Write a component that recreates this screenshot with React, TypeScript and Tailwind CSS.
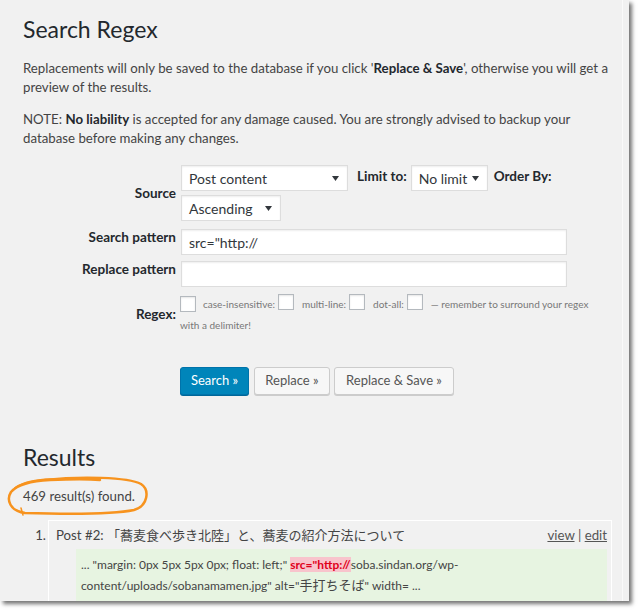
import React from 'react';

const FONT = { fontFamily: 'Lato, "Open Sans", "Noto Sans CJK JP", sans-serif' };
const JP = { fontFamily: 'Lato, "Noto Sans CJK JP", sans-serif' };

function Arrow() {
  return (
    <svg width="7" height="5" viewBox="0 0 7 5" className="shrink-0">
      <path d="M0 0h7L3.5 5z" fill="#32373c" />
    </svg>
  );
}

function Select({ value, width }: { value: string; width: string }) {
  return (
    <div className={`${width} h-[26px] bg-white border border-[#ddd] shadow-[inset_0_1px_2px_rgba(0,0,0,0.07)] flex items-center justify-between pl-[7px] pr-[8px] text-[14px] text-[#32373c]`}>
      <span>{value}</span>
      <Arrow />
    </div>
  );
}

function Checkbox() {
  return <span className="inline-block w-[16px] h-[16px] bg-white border border-[#b4b9be] shadow-[inset_0_1px_2px_rgba(0,0,0,0.1)] shrink-0" />;
}

export default function App() {
  return (
    <div className="w-[640px] h-[612px] bg-white" style={FONT}>
      <div className="relative w-[629px] h-[601px] bg-[#f1f1f1] overflow-hidden shadow-[3px_3px_4px_rgba(0,0,0,0.55)]">
        <div className="w-[623px] h-full border-r border-[#fafafa] pl-[23px] pt-[15px] text-[#444]">
          <h1 className="text-[23px] leading-[29px] text-[#23282d]">Search Regex</h1>

          <p className="mt-[15px] text-[13.25px] leading-[19px] whitespace-nowrap">
            Replacements will only be saved to the database if you click '<b className="text-[#23282d]">Replace &amp; Save</b>', otherwise you will get a
            <br />
            preview of the results.
          </p>
          <p className="mt-[13px] text-[13.25px] leading-[19px] whitespace-nowrap">
            NOTE: <b className="text-[#23282d]">No liability</b> is accepted for any damage caused. You are strongly advised to backup your
            <br />
            database before making any changes.
          </p>

          {/* form */}
          <div className="mt-[17px] text-[13.5px]">
            <div className="flex items-center">
              <div className="w-[153px] text-right font-bold text-[#23282d]">Source</div>
              <div className="ml-[5px] flex flex-col gap-[4px]">
                <div className="flex items-start">
                  <Select value="Post content" width="w-[167px]" />
                  <span className="ml-[9px] mt-[2px] leading-[19px] font-bold text-[#23282d]">Limit to:</span>
                  <div className="ml-[4px]">
                    <Select value="No limit" width="w-[77px]" />
                  </div>
                  <span className="ml-[6px] mt-[2px] leading-[19px] font-bold text-[#23282d]">Order By:</span>
                </div>
                <Select value="Ascending" width="w-[100px]" />
              </div>
            </div>

            <div className="flex items-start mt-[8px]">
              <div className="w-[153px] text-right font-bold leading-[17px] text-[#23282d]">Search pattern</div>
              <div className="ml-[5px] w-[386px] h-[26px] bg-white border border-[#ddd] shadow-[inset_0_1px_2px_rgba(0,0,0,0.07)] flex items-center pl-[7px] text-[14px] text-[#32373c]">
                src="http://
              </div>
            </div>

            <div className="flex items-start mt-[6px]">
              <div className="w-[153px] text-right font-bold leading-[17px] text-[#23282d]">Replace pattern</div>
              <div className="ml-[5px] w-[386px] h-[26px] bg-white border border-[#ddd] shadow-[inset_0_1px_2px_rgba(0,0,0,0.07)]" />
            </div>

            <div className="flex items-center mt-[9px]">
              <div className="w-[153px] text-right font-bold text-[#23282d]">Regex:</div>
              <div className="ml-[4px] flex flex-col text-[10px] text-[#777]">
                <div className="flex items-center h-[16px] whitespace-nowrap">
                  <Checkbox />
                  <span className="ml-[7px]">case-insensitive:</span>
                  <span className="ml-[3px]"><Checkbox /></span>
                  <span className="ml-[8px]">multi-line:</span>
                  <span className="ml-[3px]"><Checkbox /></span>
                  <span className="ml-[8px]">dot-all:</span>
                  <span className="ml-[3px]"><Checkbox /></span>
                  <span className="ml-[8px]">— remember to surround your regex</span>
                </div>
                <div className="mt-[6px] leading-[14px]">with a delimiter!</div>
              </div>
            </div>

            <div className="flex items-center gap-[4px] ml-[157px] mt-[35px] text-[13px]">
              <button className="w-[69px] h-[28px] rounded-[3px] bg-[#0085ba] border border-[#0073aa] text-white shadow-[0_1px_0_#006799]">
                Search »
              </button>
              <button className="ml-[1px] w-[76px] h-[28px] rounded-[3px] bg-[#f7f7f7] border border-[#ccc] text-[#555] shadow-[0_1px_0_#ccc]">
                Replace »
              </button>
              <button className="w-[120px] h-[28px] rounded-[3px] bg-[#f7f7f7] border border-[#ccc] text-[#555] shadow-[0_1px_0_#ccc]">
                Replace &amp; Save »
              </button>
            </div>
          </div>

          <h2 className="mt-[48px] text-[23px] leading-[29px] text-[#23282d]">Results</h2>
          <p className="mt-[15px] text-[13.25px] leading-[19px]">469 result(s) found.</p>

          <div className="flex mt-[14px] text-[13.25px]">
            <div className="w-[25px] pr-[2px] pt-[6px] text-right leading-[19px]">1.</div>
            <div className="w-[564px] border border-white pt-[5px] pb-[20px]">
              <div className="flex justify-between items-center pl-[7px] pr-[4px] leading-[19px]">
                <span style={JP}>
                  Post #2: <span className="text-[13px]">「蕎麦食べ歩き北陸」と、蕎麦の紹介方法について</span>
                </span>
                <span className="text-[#555]">
                  <span className="underline">view</span> | <span className="underline">edit</span>
                </span>
              </div>
              <div className="ml-[27px] mr-[4px] mt-[4px] bg-[#e7f4e1] pl-[5px] pt-[6px] pb-[6px] leading-[20px] text-[12px] whitespace-nowrap" style={JP}>
                ... "margin: 0px 5px 5px 0px; float: left;"{' '}
                <span className="bg-[#f8c4cc] text-[#e0001b] font-bold">src="http://</span>soba.sindan.org/wp-
                <br />
                content/uploads/sobanamamen.jpg" alt="<span className="text-[13px]">手打ちそば</span>" width= ...
              </div>
            </div>
          </div>
        </div>

        {/* hand-drawn highlight */}
        <svg className="absolute left-0 top-[470px]" width="160" height="52" viewBox="0 0 160 52" fill="none">
          <path
            d="M45 10 C80 6 128 7 141 14 C150 20 148 36 134 40 C110 45 60 44 25 43 C10 41 6 30 11 22 C17 15 30 11 50 10 C70 9 90 9 100 10"
            stroke="#f7931e"
            strokeWidth="2.5"
            strokeLinecap="round"
          />
          <path d="M15 18 C23 12 40 9 60 9" stroke="#f7931e" strokeWidth="2" strokeLinecap="round" />
          <path d="M21 38 L23 45" stroke="#f7931e" strokeWidth="1.5" strokeLinecap="round" />
        </svg>
      </div>
    </div>
  );
}
